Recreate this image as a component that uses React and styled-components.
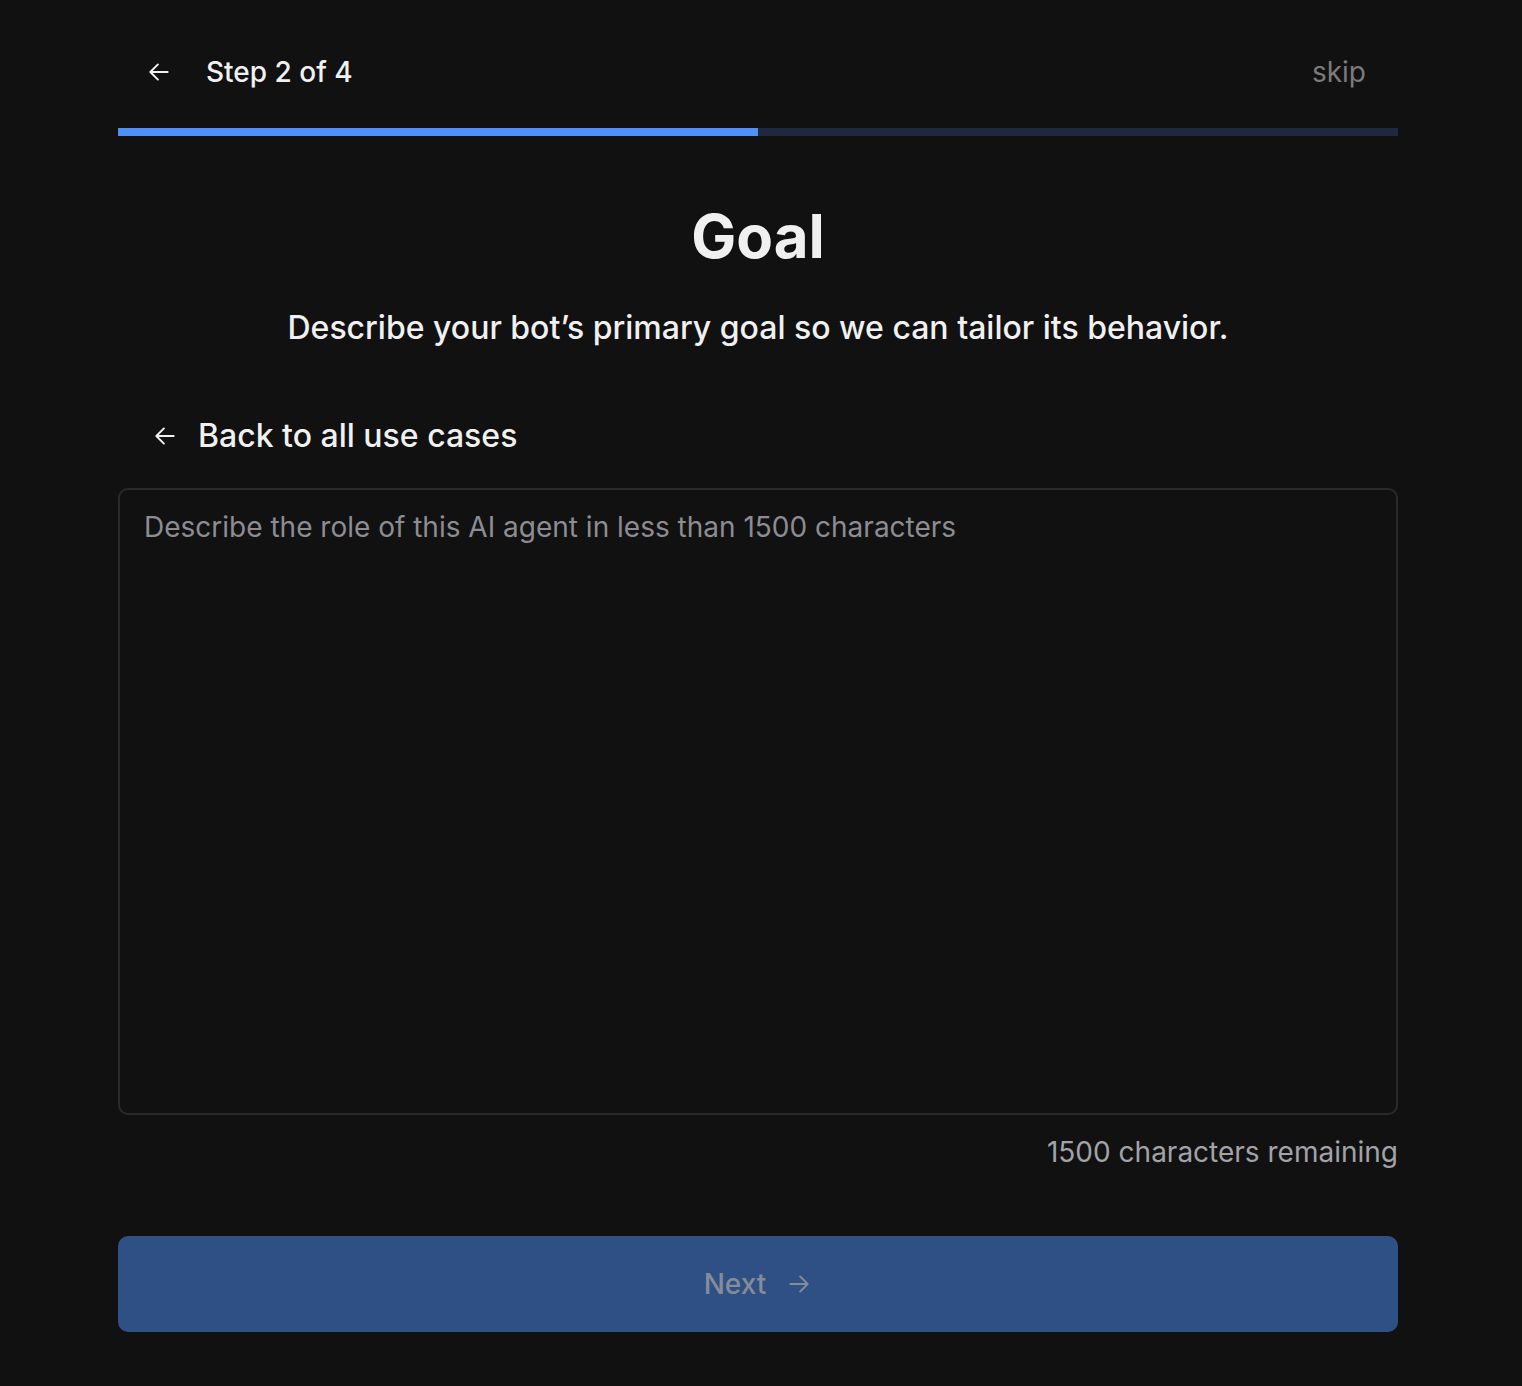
import React, { useState } from "react";
import styled, { createGlobalStyle } from "styled-components";

const GlobalStyle = createGlobalStyle`
  html, body {
    margin: 0;
    padding: 0;
    background: #111111;
  }
  body {
    font-family: Inter, "Noto Sans", sans-serif;
    color: #f2f2f2;
  }
`;

const Page = styled.div`
  width: 1280px;
  margin-left: 118px;
  padding-bottom: 54px;
  display: flex;
  flex-direction: column;
`;

const TopBar = styled.div`
  height: 128px;
  display: flex;
  align-items: center;
  justify-content: space-between;
  padding: 16px 32px 0 28px;
  box-sizing: border-box;
`;

const StepInfo = styled.div`
  display: flex;
  align-items: center;
  gap: 34px;
  font-size: 28px;
  font-weight: 500;
  color: #f0f0f0;
`;

const IconButton = styled.button`
  background: none;
  border: none;
  padding: 0;
  display: flex;
  align-items: center;
  color: inherit;
  cursor: pointer;
`;

const Skip = styled.button`
  background: none;
  border: none;
  padding: 0;
  font-family: inherit;
  font-size: 28px;
  font-weight: 400;
  color: #7b7b7b;
  cursor: pointer;
`;

const Progress = styled.div`
  height: 8px;
  background: #1e2940;
`;

const ProgressFill = styled.div`
  height: 100%;
  background: #4f8ff7;
`;

const Title = styled.h1`
  margin: 64px 0 0;
  text-align: center;
  font-size: 60px;
  font-weight: 700;
  line-height: 72px;
  color: #f0f0f0;
`;

const Subtitle = styled.p`
  margin: 36px 0 0;
  text-align: center;
  font-size: 32px;
  font-weight: 500;
  line-height: 40px;
  color: #f0f0f0;
`;

const BackLink = styled.button`
  margin: 68px 0 0 34px;
  align-self: flex-start;
  background: none;
  border: none;
  padding: 0;
  display: flex;
  align-items: center;
  gap: 20px;
  font-family: inherit;
  font-size: 32px;
  font-weight: 500;
  color: #f0f0f0;
  cursor: pointer;
`;

const TextArea = styled.textarea`
  margin-top: 33px;
  height: 627px;
  box-sizing: border-box;
  width: 100%;
  resize: none;
  background: #111111;
  border: 2px solid #2a2a2c;
  border-radius: 10px;
  padding: 20px 24px;
  font-family: inherit;
  font-size: 28px;
  line-height: 34px;
  color: #f0f0f0;
  outline: none;

  &::placeholder {
    color: #8c8c92;
  }
`;

const Counter = styled.div`
  margin-top: 19px;
  text-align: right;
  font-size: 28px;
  line-height: 36px;
  color: #a2a2a8;
`;

const NextButton = styled.button`
  margin-top: 66px;
  height: 96px;
  border: none;
  border-radius: 10px;
  background: #2f5085;
  display: flex;
  align-items: center;
  justify-content: center;
  gap: 20px;
  font-family: inherit;
  font-size: 28px;
  font-weight: 500;
  color: #858c98;
  cursor: not-allowed;
`;

const Arrow = ({ dir = "left", size = 26, color = "currentColor" }) => (
  <svg
    width={size}
    height={size}
    viewBox="0 0 24 24"
    fill="none"
    stroke={color}
    strokeWidth="1.8"
    strokeLinecap="round"
    strokeLinejoin="round"
  >
    {dir === "left" ? (
      <path d="M20 12H4M11 5l-7 7 7 7" />
    ) : (
      <path d="M4 12h16M13 5l7 7-7 7" />
    )}
  </svg>
);

const MAX = 1500;

export default function App() {
  const [goal, setGoal] = useState("");
  const step = 2;
  const total = 4;

  return (
    <>
      <GlobalStyle />
      <Page>
        <TopBar>
          <StepInfo>
            <IconButton aria-label="Back">
              <Arrow dir="left" size={26} />
            </IconButton>
            <span>
              Step {step} of {total}
            </span>
          </StepInfo>
          <Skip>skip</Skip>
        </TopBar>
        <Progress>
          <ProgressFill style={{ width: `${(step / total) * 100}%` }} />
        </Progress>

        <Title>Goal</Title>
        <Subtitle>Describe your bot’s primary goal so we can tailor its behavior.</Subtitle>

        <BackLink>
          <Arrow dir="left" size={26} />
          Back to all use cases
        </BackLink>

        <TextArea
          value={goal}
          maxLength={MAX}
          onChange={(e) => setGoal(e.target.value)}
          placeholder={`Describe the role of this AI agent in less than ${MAX} characters`}
        />
        <Counter>{MAX - goal.length} characters remaining</Counter>

        <NextButton disabled={!goal}>
          Next
          <Arrow dir="right" size={26} />
        </NextButton>
      </Page>
    </>
  );
}
